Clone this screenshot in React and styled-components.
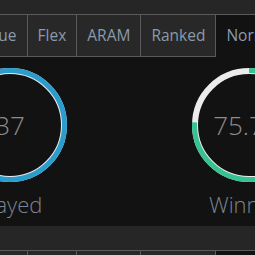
import { styled, createGlobalStyle } from 'styled-components';

const tabs = ['Solo Queue', 'Flex', 'ARAM', 'Ranked', 'Normal'];

const stats = [
  { value: '37', label: 'Played', color: '#2a9dcc', pct: 100 },
  { value: '75.7%', label: 'Winning', color: '#38c291', pct: 75.7 },
];

function Ring({ color, pct }) {
  const r = 54.5;
  const c = 2 * Math.PI * r;
  return (
    <svg width="120" height="120" viewBox="0 0 120 120">
      <circle cx="60" cy="60" r="54" fill="none" stroke="#ececec" strokeWidth="6" />
      <circle
        cx="60"
        cy="60"
        r={r}
        fill="none"
        stroke={color}
        strokeWidth="5"
        strokeDasharray={`${(c * pct) / 100} ${c}`}
        transform="rotate(-90 60 60)"
      />
    </svg>
  );
}

function Section({ active }) {
  return (
    <>
      <TabRow>
        {tabs.map((t, i) => (
          <Tab key={t} active={i === active}>{t}</Tab>
        ))}
      </TabRow>
      <Panel>
        <StatRow>
          {stats.map((s) => (
            <Stat key={s.label}>
              <RingBox>
                <Ring color={s.color} pct={s.pct} />
                <Value>{s.value}</Value>
              </RingBox>
              <Label>{s.label}</Label>
            </Stat>
          ))}
        </StatRow>
      </Panel>
    </>
  );
}

function App() {
  return (
    <Page>
      <GlobalStyle />
      <Band height={14} />
      <Section active={4} />
      <Band height={24} />
      <Section active={4} />
    </Page>
  );
}

export default App;

const GlobalStyle = createGlobalStyle`
  body {
    margin: 0;
    background: #121212;
    overflow: hidden;
    font-family: 'Open Sans', 'Noto Sans', sans-serif;
  }
`;

const Page = styled.div`
  width: 255px;
  height: 255px;
  overflow: hidden;
`;

const Band = styled.div`
  height: ${(p) => p.height}px;
  background: #262626;
`;

const TabRow = styled.div`
  display: flex;
  margin-left: -77px;
  background: #282828;
  border-top: 1px solid #5a5a5a;
  white-space: nowrap;
`;

const Tab = styled.div`
  flex: none;
  height: 41px;
  line-height: 41px;
  padding: 0 10px;
  font-size: 15.5px;
  color: #8a9bab;
  border-right: ${(p) => (p.active ? 'none' : '1px solid #5a5a5a')};
  border-bottom: 1px solid ${(p) => (p.active ? '#121212' : '#5a5a5a')};
  background: ${(p) => (p.active ? '#121212' : '#282828')};
`;

const Panel = styled.div`
  height: 169px;
  background: #121212;
`;

const StatRow = styled.div`
  display: flex;
  gap: 119px;
  margin-left: -50px;
  padding-top: 8px;
`;

const Stat = styled.div`
  flex: none;
  width: 120px;
  display: flex;
  flex-direction: column;
  align-items: center;
`;

const RingBox = styled.div`
  position: relative;
  width: 120px;
  height: 120px;
`;

const Value = styled.div`
  position: absolute;
  inset: 0;
  display: flex;
  align-items: center;
  justify-content: center;
  font-size: 26px;
  font-weight: 300;
  color: #8c8c8c;
  white-space: nowrap;
`;

const Label = styled.div`
  margin-top: 4px;
  font-size: 22px;
  font-weight: 300;
  color: #7a8591;
  white-space: nowrap;
`;
